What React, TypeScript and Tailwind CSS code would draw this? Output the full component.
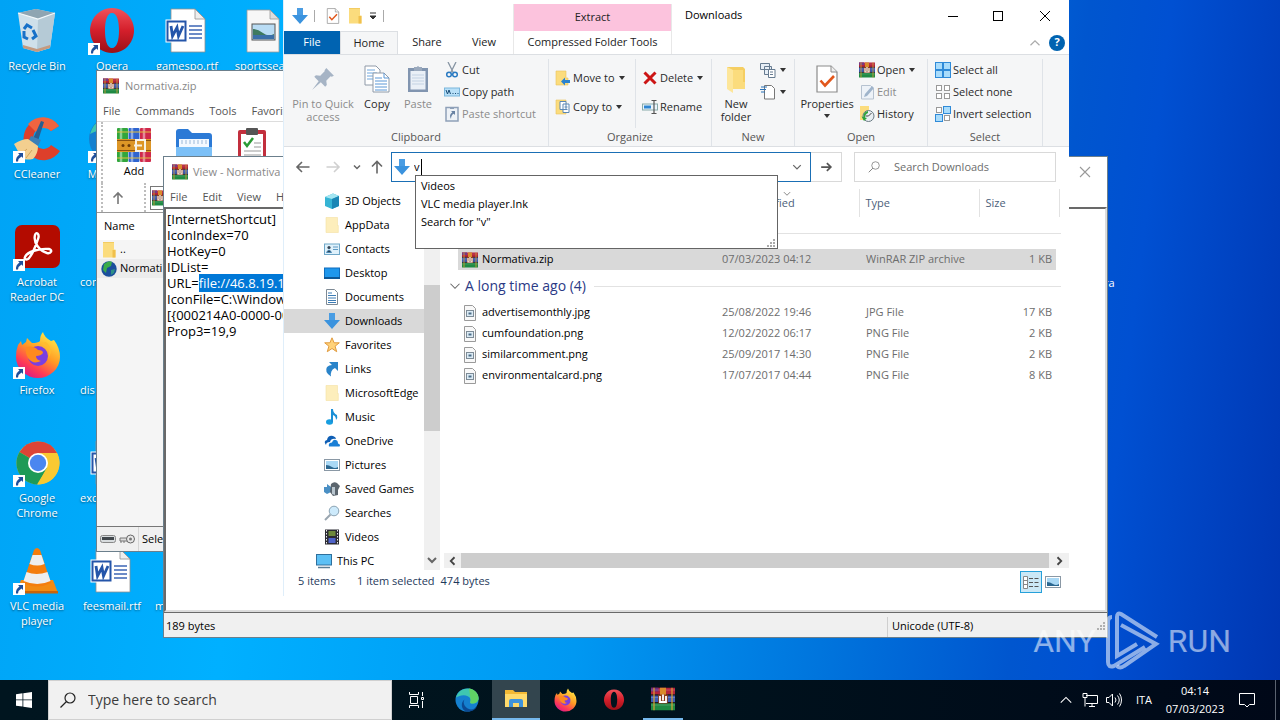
import type { ReactNode } from 'react'
import clsx from 'clsx'

type IconProps = { className?: string }

function ArrowDown({ className = 'size-4' }: IconProps) {
  return (
    <svg viewBox="0 0 16 16" className={className}>
      <path d="M5 0h6v7h5l-8 9-8-9h5z" fill="#3b93de" />
      <path d="M5 0h6v7H5z" fill="#4a9de3" />
    </svg>
  )
}

function Winrar({ className = 'size-4' }: IconProps) {
  return (
    <svg viewBox="0 0 16 16" className={className}>
      <rect y="0.5" width="16" height="5" fill="#b3243c" />
      <rect y="5.5" width="16" height="5" fill="#3a5bb5" />
      <rect y="10.5" width="16" height="5" fill="#1f8a43" />
      <rect y="0.5" width="5" height="2.5" fill="#6c2c7b" />
      <path d="M0 2h16M0 7h16M0 12h16" stroke="#fff" strokeOpacity=".2" strokeWidth=".7" />
      <path d="M0 5.3h16M0 10.4h16" stroke="#251a20" strokeWidth=".8" />
      <path d="M2 .5v15M14 .5v15" stroke="#d9a233" strokeWidth=".8" />
      <rect x="6" y="0.5" width="4" height="10" fill="#d98a2b" />
      <rect x="4.8" y="5" width="6.4" height="6" fill="#8c3f1c" />
      <path d="M6 6v4h4V6M8 5v4" stroke="#fff" strokeWidth="1.2" fill="none" />
    </svg>
  )
}

function WinrarBooks({ className = 'size-9' }: IconProps) {
  return (
    <svg viewBox="0 0 34 36" className={className}>
      <rect x="0" y="1" width="11" height="34" rx="1" fill="#31a63c" />
      <rect x="11.500" y="1" width="11" height="34" rx="1" fill="#2e64cf" />
      <rect x="23" y="1" width="11" height="34" rx="1" fill="#d0284a" />
      <path d="M4 1v34M15 1v34M27 1v34" stroke="#fff" strokeOpacity=".45" strokeWidth="2.500" />
      <path d="M0 5h34M0 31h34" stroke="#e0c040" strokeWidth="1" />
      <rect y="12" width="34" height="13" fill="#dd9626" />
      <path d="M0 13.500h34M0 23.500h34" stroke="#8a5312" strokeWidth="1" />
      <rect x="19" y="13" width="9" height="11" fill="none" stroke="#f7f2e4" strokeWidth="2" />
      <path d="M17 18.500h8" stroke="#f7f2e4" strokeWidth="2" />
      <circle cx="6" cy="18.500" r="1.500" fill="#6d3b08" />
      <circle cx="12" cy="18.500" r="1.500" fill="#6d3b08" />
    </svg>
  )
}

function Folder({ className = 'size-4' }: IconProps) {
  return (
    <svg viewBox="0 0 16 16" className={className}>
      <path d="M2 .5h11v7h1.500v8H2z" fill="#fbdc7d" />
      <path d="M11.500 8h3v7.500h-3z" fill="#f0c04c" />
      <path d="M2 .5h11" stroke="#f3cc62" />
    </svg>
  )
}

function BigFolder() {
  return (
    <svg viewBox="0 0 20 28" className="h-7 w-5">
      <path d="M1 2h16l2 2v13h-2v7H1z" fill="#f5ce62" />
      <path d="M1 2l6 3v23l-6-4z" fill="#fde69a" />
      <path d="M7 5h10v12h2v7H7z" fill="#fbdc7d" />
    </svg>
  )
}

function PaleFolder() {
  return (
    <svg viewBox="0 0 16 16" className="size-4">
      <path d="M2 .5h11.500v8h.8v7H2z" fill="#fdeebc" stroke="#f3e0a2" strokeWidth=".6" />
    </svg>
  )
}

function CheckDoc({ className = 'size-4' }: IconProps) {
  return (
    <svg viewBox="0 0 22 28" className={className}>
      <path d="M1 1h14l6 6v20H1z" fill="#fff" stroke="#8b8b8b" strokeWidth="1.200" />
      <path d="M15 1v6h6" fill="#eee" stroke="#8b8b8b" />
      <path d="M4.500 15.500l4.500 5L18 11" fill="none" stroke="#e2571c" strokeWidth="2.600" />
    </svg>
  )
}

function WordFile() {
  return (
    <svg viewBox="0 0 48 48" className="size-12">
      <path d="M8 2h24l10 10v33H8z" fill="#fff" stroke="#8f8f8f" strokeWidth=".8" />
      <path d="M32 2v10h10z" fill="#eee" stroke="#8f8f8f" strokeWidth=".8" />
      <path d="M26 19h13M26 23h13M26 27h13M26 31h13" stroke="#3d66b5" strokeWidth="1.300" />
      <rect x="3" y="13" width="21" height="22" fill="#2455a9" stroke="#fff" />
      <rect x="5.500" y="15.500" width="16" height="17" fill="#fff" />
      <path d="M8 19l1.500 10L14 20.500 15.500 29 20 19" fill="none" stroke="#2455a9" strokeWidth="2.800" />
    </svg>
  )
}

function ImageFile({ className = 'size-12' }: IconProps) {
  return (
    <svg viewBox="0 0 48 48" className={className}>
      <path d="M9 3h23l9 9v33H9z" fill="#f7f7f7" stroke="#9a9a9a" strokeWidth=".8" />
      <path d="M32 3v9h9z" fill="#ddd" stroke="#9a9a9a" strokeWidth=".8" />
      <rect x="14" y="17" width="23" height="16" fill="#b9dcf4" stroke="#555" />
      <path d="M15 22q5 0 10 4t11 1v5H15z" fill="#3e7a5f" />
      <path d="M15 28h21v4H15z" fill="#3a6fa8" />
    </svg>
  )
}

function RecycleBin() {
  return (
    <svg viewBox="0 0 48 48" className="size-12">
      <path d="M5 6l18-4 19 4-5 35-13 4-14-4z" fill="#cfe0ea" />
      <path d="M5 6l18-4 19 4-17 6z" fill="#8fa5b2" />
      <path d="M25 12L42 6l-5 35-13 4z" fill="#b5cad6" />
      <path d="M10 38l14 4 13-4v3l-13 4-14-4z" fill="#c39a80" />
      <path d="M5 6l20 6 17-6" fill="none" stroke="#f3f8fb" strokeWidth="1.200" />
      <path d="M11 22l3-4 5 3M20 23l3 6-4 3M15 32l-4-2v-6" fill="none" stroke="#1771c8" strokeWidth="3" />
    </svg>
  )
}

function Opera({ className = 'size-12' }: IconProps) {
  return (
    <svg viewBox="0 0 48 48" className={className}>
      <defs>
        <linearGradient id="opera" x1="0" y1="0" x2="0" y2="1">
          <stop offset="0" stopColor="#f0525b" />
          <stop offset="0.500" stopColor="#d41f2b" />
          <stop offset="1" stopColor="#9a1017" />
        </linearGradient>
      </defs>
      <path
        d="M24 1a22 22.500 0 1 0 .1 0zM24 6c5 0 7 8 7 17.500S29 41 24 41s-7-8-7-17.500S19 6 24 6z"
        fill="url(#opera)"
        fillRule="evenodd"
      />
    </svg>
  )
}

function CCleaner() {
  return (
    <svg viewBox="0 0 48 48" className="size-12">
      <path d="M46 11A20 21 0 1 0 47 36l-9-6a10 11 0 1 1 0-14z" fill="#dd3f2b" />
      <path d="M46 11A20 21 0 0 0 15 9l8 8a10 10 0 0 1 15-1z" fill="#ef6440" />
      <path d="M28 6l3 1-6 19-5-2z" fill="#285f91" />
      <path d="M18 21l10 4-3 6-10-4z" fill="#3b80b8" />
      <path d="M1 29q8-5 14-5l10 7q0 8-5 13-10 2-19-3l5-3z" fill="#f3cf8f" />
      <path d="M6 41l8-7M13 43l6-8" stroke="#d3a45c" />
    </svg>
  )
}

function Acrobat() {
  return (
    <svg viewBox="0 0 48 48" className="size-12">
      <rect x="2" y="2" width="45" height="43" rx="7" fill="#b30b00" />
      <path
        d="M12 34c2-5 14-9 24-8 4 1 2 5-2 4-7-2-14-10-12-18 1-4 5-1 3 4-2 7-7 18-10 20-2 1-4 0-3-2z"
        fill="none"
        stroke="#fff"
        strokeWidth="2.400"
      />
    </svg>
  )
}

function Firefox({ className = 'size-12' }: IconProps) {
  return (
    <svg viewBox="0 0 48 48" className={className}>
      <defs>
        <linearGradient id="fox" x1="0.800" y1="0" x2="0.200" y2="1">
          <stop offset="0" stopColor="#fff04a" />
          <stop offset="0.450" stopColor="#ff9a24" />
          <stop offset="0.750" stopColor="#ff3b55" />
          <stop offset="1" stopColor="#d4148f" />
        </linearGradient>
      </defs>
      <path
        d="M5 14l3-4 1 4 4-3 1-4 5 5q6 0 8-2 0-6 3-9 1 5 8 9l3-1q6 8 6 17a22 21 0 1 1-44 0q0-7 2-12z"
        fill="url(#fox)"
      />
      <circle cx="25" cy="25" r="10" fill="#7a3fe0" />
      <path d="M13 16q8-2 12 3 5 0 5 3-2 3-7 3 0 4 5 5-8 4-13-3-3-5-2-11z" fill="#ff8a1f" />
      <path d="M20 13q12-4 16 6 1 6-2 10 8-10-1-18z" fill="#ffbd2e" />
    </svg>
  )
}

function Chrome() {
  return (
    <svg viewBox="0 0 48 48" className="size-12">
      <circle cx="25" cy="24" r="21.500" fill="#f9c932" />
      <path d="M25 24L6.500 13A21.500 21.500 0 0 1 44 14z" fill="#dc4437" />
      <path d="M25 24L6.500 13A21.500 21.500 0 0 0 24 45.500L34 29z" fill="#1e9a57" />
      <path d="M25 14h19a21.500 21.500 0 0 1-19 31.500l9-17z" fill="#f9c932" />
      <circle cx="25" cy="24" r="10" fill="#fff" />
      <circle cx="25" cy="24" r="8.200" fill="#4a86f0" />
    </svg>
  )
}

function Vlc() {
  return (
    <svg viewBox="0 0 48 48" className="size-12">
      <path d="M8 33h32l5 13H3z" fill="#f28a12" />
      <path d="M3 44h42v2.500H3z" fill="#c9640a" />
      <path d="M21 3q3-4 6 0l11 33q-14 7-28 0z" fill="#f47d0d" />
      <path d="M19.500 8h9l3 9q-7 3-15 0z" fill="#eee" />
      <path d="M13.500 25q10 4 21 0l3 9q-13 6-27 0z" fill="#eee" />
    </svg>
  )
}

function Edge({ className = 'size-12' }: IconProps) {
  return (
    <svg viewBox="0 0 48 48" className={className}>
      <circle cx="24" cy="24" r="23" fill="#1580cf" />
      <path d="M2 19C6 5 18 0 28 1c14 2 20 13 19 21-1 7-8 10-14 9-5-1-1-4-2-9-3-8-15-9-22-6-3 1-5 2-7 3z" fill="#3fc6b0" />
      <path d="M28 1c14 2 20 13 19 21-1 7-8 10-14 9-5-1-1-4-2-9z" fill="#5fd365" />
      <path d="M19 23c-5 7 2 19 13 20 5 0 9-3 12-6-5 9-14 11-22 10-10-4-11-18-3-24z" fill="#0b4a94" />
    </svg>
  )
}

function ShortcutBadge() {
  return (
    <svg viewBox="0 0 12 12" className="absolute bottom-0 left-0 size-3">
      <rect width="12" height="12" fill="#fff" />
      <path d="M5 2h5v5L8.500 5.500Q5.500 7 5 10.500H3Q2.500 6 6.500 3.500z" fill="#1f4f9b" />
    </svg>
  )
}

type Shortcut = { label?: string; icon?: ReactNode; link?: boolean; cut?: boolean }

// column by column, six rows each
const shortcuts: Shortcut[] = [
  { label: 'Recycle Bin', icon: <RecycleBin /> },
  { label: 'CCleaner', icon: <CCleaner />, link: true },
  { label: 'Acrobat Reader DC', icon: <Acrobat />, link: true },
  { label: 'Firefox', icon: <Firefox />, link: true },
  { label: 'Google Chrome', icon: <Chrome />, link: true },
  { label: 'VLC media player', icon: <Vlc />, link: true },
  { label: 'Opera', icon: <Opera />, link: true },
  { label: 'Microsoft', icon: <Edge />, link: true },
  { label: 'con', cut: true },
  { label: 'dis', cut: true },
  { label: 'exc', icon: <WordFile />, cut: true },
  { label: 'feesmail.rtf', icon: <WordFile /> },
  { label: 'gamespo.rtf', icon: <WordFile /> },
  {},
  {},
  {},
  {},
  { label: 'ma', cut: true },
  { label: 'sportssear', icon: <ImageFile /> },
]

function Desktop() {
  return (
    <div className="grid w-max auto-cols-[75px] grid-flow-col grid-rows-[repeat(6,108px)] text-white">
      {shortcuts.map((s, i) => (
        <div key={i} className="flex w-[74px] flex-col items-center pt-[7px]">
          <div className="relative size-12">
            {s.icon}
            {s.link && <ShortcutBadge />}
          </div>
          <span
            className={clsx(
              'mt-[3px] w-full px-[5px] leading-[15px] [text-shadow:0_1px_2px_#00000080]',
              s.cut ? 'text-left' : 'text-center',
            )}
          >
            {s.label}
          </span>
        </div>
      ))}
    </div>
  )
}

function Menu({ items }: { items: string[] }) {
  return (
    <div className="flex h-5 items-center gap-[15px] px-[6px] text-[#555]">
      {items.map((item) => (
        <button key={item} className="whitespace-nowrap">
          {item}
        </button>
      ))}
    </div>
  )
}

function Grip() {
  return <span className="h-full border-l-2 border-dotted border-[#bdbdbd]" />
}

function ArchiveWindow() {
  return (
    <section className="absolute top-[70px] left-24 flex h-[482px] w-3/5 flex-col border border-[#6b7f8c] bg-white">
      <header className="flex h-[30px] items-center gap-[6px] px-[6px] text-[#888]">
        <Winrar />
        Normativa.zip
      </header>
      <Menu items={['File', 'Commands', 'Tools', 'Favorites']} />
      <div className="flex h-[62px] items-start border-t border-[#ddd] pl-1">
        <Grip />
        <button className="flex w-[62px] flex-col items-center pt-[5px] text-black">
          <WinrarBooks />
          <span className="leading-4">Add</span>
        </button>
        <button aria-label="Extract To" className="flex w-[58px] justify-center pt-[6px]">
          <svg viewBox="0 0 38 38" className="size-[38px]">
            <path d="M1 4q0-3 3-3h9l4 4h17q3 0 3 3v28H1z" fill="#2c7ad6" />
            <path d="M4 11h30v25H4z" fill="#f4f9ff" />
            <path d="M7 12v4M11 12v4M15 12v4M19 12v4M23 12v4M27 12v4M31 12v4" stroke="#9db9d8" />
            <path d="M1 19h36v17H1z" fill="#7cc0f7" />
          </svg>
        </button>
        <button aria-label="Test" className="flex w-[58px] justify-center pt-[6px]">
          <svg viewBox="0 0 30 38" className="h-[38px] w-[30px]">
            <rect x="1" y="2" width="28" height="36" rx="2" fill="#c22f3d" />
            <rect x="4" y="6" width="22" height="30" fill="#fff" />
            <rect x="9" y="0" width="12" height="7" rx="1" fill="#555" />
            <path d="M7 14l3 4 6-8" stroke="#2a9a35" strokeWidth="2.500" fill="none" />
            <path d="M17 15h7M17 19h7M7 23h17M7 27h17" stroke="#999" />
          </svg>
        </button>
      </div>
      <div className="flex h-[30px] items-center border-b border-[#999] pl-1">
        <Grip />
        <button aria-label="Up" className="mr-[18px] ml-[7px]">
          <svg viewBox="0 0 16 16" className="size-4">
            <path d="M8 14V3M3.500 7.500L8 3l4.500 4.500" fill="none" stroke="#777" strokeWidth="1.600" />
          </svg>
        </button>
        <Grip />
        <div className="ml-1 flex h-6 flex-1 items-center border border-[#777] pl-px">
          <Winrar />
        </div>
      </div>
      <div className="flex-1 bg-[#f5f5f5] text-black">
        <div className="flex h-[27px] items-center bg-white pl-[7px]">Name</div>
        <div className="flex h-[19px] items-center gap-[3px] pl-1">
          <Folder className="size-4" />
          ..
        </div>
        <div className="flex h-[19px] items-center gap-[3px] bg-[#ececec] pl-1">
          <svg viewBox="0 0 16 16" className="size-4">
            <circle cx="8" cy="8" r="7.700" fill="#1b4f9c" />
            <path d="M3 3q5-4 8-2l-1 4-4 2-1 5-3-3z" fill="#3bab4a" />
            <path d="M10 9l4-1-1 4-3 2z" fill="#2d8f86" />
          </svg>
          Normati
        </div>
      </div>
      <footer className="flex h-[25px] items-center gap-[3px] border-t border-[#777] bg-[#f0f0f0] pl-[3px] text-black">
        <svg viewBox="0 0 16 8" className="h-2 w-4">
          <rect x=".5" y=".5" width="15" height="7" rx="2" fill="#d8dcde" stroke="#888" />
          <rect x="2" y="2" width="12" height="3" fill="#41474c" />
        </svg>
        <svg viewBox="0 0 16 12" className="h-3 w-4">
          <path d="M1 5h8v3H1zM2 8v2M5 8v2" stroke="#777" fill="#ddd" />
          <circle cx="11.500" cy="6" r="4" fill="#e8e8e8" stroke="#666" />
          <circle cx="11.500" cy="6" r="1.500" fill="#777" />
        </svg>
        <span className="h-full border-l border-[#d5d5d5]" />
        <span>Sele</span>
      </footer>
    </section>
  )
}

const lines = ['[InternetShortcut]', 'IconIndex=70', 'HotKey=0', 'IDList=']

function ViewerWindow() {
  return (
    <section className="absolute top-[156px] right-[172px] left-[163px] flex h-[482px] flex-col border border-[#6b7f8c] bg-white">
      <header className="flex h-[30px] items-center gap-[5px] px-2 text-[#888]">
        <Winrar />
        <span className="flex-1">View - Normativa</span>
        <button aria-label="Close" className="mr-2">
          <svg viewBox="0 0 12 12" className="size-3">
            <path d="M1 1l10 10M11 1L1 11" stroke="#999" strokeWidth="1.100" />
          </svg>
        </button>
      </header>
      <Menu items={['File', 'Edit', 'View', 'Help']} />
      <pre className="flex-1 border-2 border-[#696969] border-r-[#dcdcdc] border-b-[#dcdcdc] pt-[2px] pl-px font-['Open_Sans',sans-serif] text-[13px] leading-4 text-black">
        {lines.map((line) => (
          <div key={line}>{line}</div>
        ))}
        <div>
          URL=<span className="bg-[#0078d7] text-white">file://46.8.19.1</span>
        </div>
        <div>{'IconFile=C:\\Windows'}</div>
        <div>{'[{000214A0-0000-00'}</div>
        <div>Prop3=19,9</div>
      </pre>
      <footer className="flex h-[25px] items-center border-t border-[#696969] bg-[#f0f0f0] pt-[3px] text-black">
        <span className="flex-1 pl-[2px]">189 bytes</span>
        <span className="flex h-5 w-[220px] items-center justify-between border-l border-[#cfcfcf] pl-1">
          Unicode (UTF-8)
          <svg viewBox="0 0 12 12" className="size-3">
            <path d="M8 2h2M5 5h2M8 5h2M2 8h2M5 8h2M8 8h2" stroke="#b0b0b0" strokeWidth="2" />
          </svg>
        </span>
      </footer>
    </section>
  )
}

function Caret() {
  return (
    <svg viewBox="0 0 6 4" className="h-1 w-1.5 shrink-0">
      <path d="M0 0h6L3 4z" fill="#333" />
    </svg>
  )
}

type SmallButtonProps = { icon: ReactNode; label: string; muted?: boolean; caret?: boolean }

function SmallButton({ icon, label, muted, caret }: SmallButtonProps) {
  return (
    <button
      className={clsx(
        'flex h-[22px] items-center gap-[2px] whitespace-nowrap',
        muted ? 'text-[#8b8b8b]' : 'text-[#2a2a2a]',
      )}
    >
      {icon}
      {label}
      {caret && (
        <span className="pl-[2px]">
          <Caret />
        </span>
      )}
    </button>
  )
}

type BigButtonProps = { icon: ReactNode; label: string; muted?: boolean; className: string; caret?: boolean }

function BigButton({ icon, label, muted, className, caret }: BigButtonProps) {
  return (
    <button
      className={clsx(
        'flex flex-col items-center pt-[6px] leading-[13px]',
        muted ? 'text-[#8b8b8b]' : 'text-[#2a2a2a]',
        className,
      )}
    >
      <span className="mb-1 flex h-7 items-center">{icon}</span>
      {label}
      {caret && (
        <span className="mt-1">
          <Caret />
        </span>
      )}
    </button>
  )
}

function Group({ name, className, children }: { name: string; className: string; children: ReactNode }) {
  return (
    <div className={clsx('flex shrink-0 flex-col border-r border-[#dfe3e8] text-[#555]', className)}>
      <div className="flex flex-1">{children}</div>
      <div className="h-[18px] text-center leading-[18px]">{name}</div>
    </div>
  )
}

function SelectIcon({ fills }: { fills: boolean[] }) {
  return (
    <svg viewBox="0 0 16 16" className="size-4">
      {fills.map((on, i) => (
        <rect
          key={i}
          x={(i % 2) * 8 + (on ? 0.5 : 1.5)}
          y={Math.floor(i / 2) * 8 + (on ? 0.5 : 1.5)}
          width={on ? 7 : 5}
          height={on ? 7 : 5}
          fill={on ? '#a9dcfb' : '#fff'}
          stroke={on ? '#2f8ad8' : '#999'}
        />
      ))}
    </svg>
  )
}

function Ribbon() {
  return (
    <div className="flex h-[93px] shrink-0 border-y border-[#dcdfe3] bg-[#f5f6f7] pt-1">
      <Group name="Clipboard" className="w-[265px]">
        <BigButton
          label="Pin to Quick access"
          muted
          className="w-[78px]"
          icon={
            <svg viewBox="0 0 22 22" className="size-6">
              <path d="M14 1l7 7-2 1-1-.5-4 4 .5 4-1.500 1.500-4-4L1 21l6-8-4-4 1.500-1.500 4 .5 4-4L12.500 3z" fill="#a6b4c5" />
            </svg>
          }
        />
        <BigButton
          label="Copy"
          className="w-[30px]"
          icon={
            <svg viewBox="0 0 26 28" className="h-7 w-[26px]">
              <path d="M1 1h11l4 4v15H1z" fill="#fff" stroke="#8f9aa8" />
              <path d="M3 5h8M3 8h10M3 11h6M3 14h6" stroke="#6ea6dd" />
              <path d="M9 8h11l5 5v14H9z" fill="#fff" stroke="#8f9aa8" />
              <path d="M20 8v5h5M11 13h7M11 16h12M11 19h12M11 22h12M11 25h12" stroke="#5b97d6" fill="none" />
            </svg>
          }
        />
        <BigButton
          label="Paste"
          muted
          className="w-[52px]"
          icon={
            <svg viewBox="0 0 22 28" className="h-7 w-[22px]">
              <rect x="1" y="3" width="20" height="24" fill="#8195b0" />
              <rect x="3.500" y="6" width="15" height="18.500" fill="#eaf0f7" />
              <path d="M7 2h3q1-2 2 0h3v4H7z" fill="#9aa9bd" />
              <path d="M5 10h12M5 13h12M5 16h12M5 19h12" stroke="#c3d2e3" />
            </svg>
          }
        />
        <div className="flex flex-col">
          <SmallButton
            label="Cut"
            icon={
              <svg viewBox="0 0 16 16" className="size-4">
                <path d="M4 0l5.500 11M12 0L6.500 11" stroke="#8694a3" strokeWidth="1.300" />
                <circle cx="5" cy="12.500" r="2.300" fill="none" stroke="#2a7ac2" strokeWidth="1.500" />
                <circle cx="11" cy="12.500" r="2.300" fill="none" stroke="#2a7ac2" strokeWidth="1.500" />
              </svg>
            }
          />
          <SmallButton
            label="Copy path"
            icon={
              <svg viewBox="0 0 16 16" className="size-4">
                <rect x=".5" y="4" width="15" height="8" fill="#b8e0f8" stroke="#7ab6dc" />
                <path d="M2 6l1.500 4L5 6l1.500 4M8.500 9.500h1M11 9.500h1M13.500 9.500h1" stroke="#174a75" fill="none" />
              </svg>
            }
          />
          <SmallButton
            label="Paste shortcut"
            muted
            icon={
              <svg viewBox="0 0 16 16" className="size-4">
                <rect x="2" y="1.500" width="12" height="13.500" fill="#eef2f7" stroke="#8ea0b8" strokeWidth="1.500" />
                <path d="M6 1h4v2H6z" fill="#8ea0b8" />
                <path d="M7 5h4v4L9.700 7.700Q7 9 7 13 4.500 9 8.300 6.300z" fill="#6882a3" />
              </svg>
            }
          />
        </div>
      </Group>
      <Group name="Organize" className="w-[163px]">
        <div className="flex w-[86px] flex-col gap-[7px] pt-2 pl-[6px]">
          <SmallButton
            label="Move to"
            caret
            icon={
              <svg viewBox="0 0 16 16" className="size-4">
                <path d="M1 1h10v7h2v7H1z" fill="#fbdc7d" stroke="#e9c25a" strokeWidth=".6" />
                <path d="M6 11.500l4-4V10h5v3h-5v2.500z" fill="#2a82cf" />
              </svg>
            }
          />
          <SmallButton
            label="Copy to"
            caret
            icon={
              <svg viewBox="0 0 16 16" className="size-4">
                <path d="M1 1h10v14H1z" fill="#fbdc7d" stroke="#e9c25a" strokeWidth=".6" />
                <path d="M5 2.500h6v8H5zM8 5h6v8.500H8z" fill="#fff" stroke="#5c88b5" />
                <path d="M9.500 8h3M9.500 10.500h3" stroke="#5c88b5" />
              </svg>
            }
          />
        </div>
        <div className="flex flex-col gap-[7px] border-l border-[#dfe3e8] pt-2 pl-[6px]">
          <SmallButton
            label="Delete"
            caret
            icon={
              <svg viewBox="0 0 16 16" className="size-4">
                <path d="M2.500 2.500l11 11M13.500 2.500l-11 11" stroke="#cc1515" strokeWidth="3" />
              </svg>
            }
          />
          <SmallButton
            label="Rename"
            icon={
              <svg viewBox="0 0 16 16" className="size-4">
                <rect x=".5" y="5" width="15" height="6" fill="#e9f4fc" stroke="#8aa" />
                <rect x="2" y="6.500" width="7" height="3" fill="#2f86d2" />
                <path d="M9.500 1.500h5M9.500 14.500h5M12 2v12" stroke="#555" strokeWidth="1.200" />
              </svg>
            }
          />
        </div>
      </Group>
      <Group name="New" className="w-[83px]">
        <BigButton label="New folder" className="w-12" icon={<BigFolder />} />
        <div className="flex flex-col">
          <SmallButton
            label=""
            caret
            icon={
              <svg viewBox="0 0 16 16" className="size-4">
                <path d="M.5 1.500h9v6h-9zM4.500 4.500h7v8h-7z" fill="#e6eef6" stroke="#667b90" />
                <path d="M8.500 7.500h6.500v8H8.500zM10 10h3M10 12.500h3" fill="#fff" stroke="#667b90" />
              </svg>
            }
          />
          <SmallButton
            label=""
            caret
            icon={
              <svg viewBox="0 0 16 16" className="size-4">
                <path d="M4.500 1.500h7l3 3v10.500h-10z" fill="#fff" stroke="#777" />
                <path d="M1 3h6M0 5.500h6M1 8h4" stroke="#2a72b8" strokeWidth="1.200" />
              </svg>
            }
          />
        </div>
      </Group>
      <Group name="Open" className="w-[133px]">
        <BigButton label="Properties" className="w-16" icon={<CheckDoc className="h-7 w-[22px]" />} caret />
        <div className="flex flex-col">
          <SmallButton label="Open" caret icon={<Winrar />} />
          <SmallButton
            label="Edit"
            muted
            icon={
              <svg viewBox="0 0 16 16" className="size-4">
                <path d="M2.500 1.500h9l3 3v10.500h-12z" fill="#edf2f8" stroke="#b6c2d0" />
                <path d="M5 13l1-3 7-8 2 2-7 8z" fill="#9fb4cb" />
              </svg>
            }
          />
          <SmallButton
            label="History"
            icon={
              <svg viewBox="0 0 16 16" className="size-4">
                <path d="M1 0h9v14H1z" fill="#fbdc7d" />
                <circle cx="9.500" cy="10" r="5.500" fill="#e8eef2" stroke="#6a7a83" />
                <path d="M9.500 10l3-3M9.500 10h-3" stroke="#444" />
                <path d="M9 5Q4 6 4.500 11l-2-.5L5 15l3-3-2-.5Q6 8 9 7z" fill="#2fa33c" />
              </svg>
            }
          />
        </div>
      </Group>
      <Group name="Select" className="w-[115px]">
        <div className="flex flex-col pl-[7px]">
          <SmallButton label="Select all" icon={<SelectIcon fills={[true, true, true, true]} />} />
          <SmallButton label="Select none" icon={<SelectIcon fills={[false, false, false, false]} />} />
          <SmallButton label="Invert selection" icon={<SelectIcon fills={[false, true, true, false]} />} />
        </div>
      </Group>
    </div>
  )
}

function Glyph({ d, className = 'size-4', stroke = '#666', width = 1.6 }: { d: string; className?: string; stroke?: string; width?: number }) {
  return (
    <svg viewBox="0 0 16 16" className={className}>
      <path d={d} fill="none" stroke={stroke} strokeWidth={width} />
    </svg>
  )
}

function Picture() {
  return (
    <svg viewBox="0 0 16 16" className="size-4">
      <rect x=".5" y="2.500" width="15" height="11" fill="#fff" stroke="#8a98a5" />
      <rect x="2" y="4" width="12" height="8" fill="#a9d8f5" />
      <path d="M2 8q3 0 6 2t6 0v2H2z" fill="#2b6790" />
    </svg>
  )
}

const places: { name: string; icon: ReactNode }[] = [
  {
    name: '3D Objects',
    icon: (
      <svg viewBox="0 0 16 16" className="size-4">
        <path d="M1 4l8-3.500L15 3v10l-7 3-7-3z" fill="#35b4d4" />
        <path d="M1 4l8-3.500L15 3 8 6z" fill="#a4e6f2" />
        <path d="M8 6l7-3v10l-7 3z" fill="#1a86b5" />
      </svg>
    ),
  },
  { name: 'AppData', icon: <PaleFolder /> },
  {
    name: 'Contacts',
    icon: (
      <svg viewBox="0 0 16 16" className="size-4">
        <rect x=".5" y="3" width="15" height="10.500" fill="#dff1fb" stroke="#6fa7c8" />
        <circle cx="5" cy="6.500" r="1.600" fill="#345" />
        <path d="M2.500 11.500q2.500-5 5 0zM9 6h5M9 8.500h5" fill="#345" stroke="#3c84b5" strokeWidth=".8" />
      </svg>
    ),
  },
  {
    name: 'Desktop',
    icon: (
      <svg viewBox="0 0 16 16" className="size-4">
        <rect y="2.500" width="16" height="11.500" fill="#0f6dbd" />
        <path d="M1 3.500h14v9H1z" fill="#1f97ec" />
        <path d="M0 12h16v2H0z" fill="#0d5796" />
      </svg>
    ),
  },
  {
    name: 'Documents',
    icon: (
      <svg viewBox="0 0 16 16" className="size-4">
        <path d="M2.500.5h8l3 3v12h-11z" fill="#fff" stroke="#7e8a95" />
        <path d="M4 4h4M4 6.500h8M4 9h8M4 11.500h8M4 13.500h8" stroke="#3d7cb5" />
      </svg>
    ),
  },
  { name: 'Downloads', icon: <ArrowDown /> },
  {
    name: 'Favorites',
    icon: (
      <svg viewBox="0 0 16 16" className="size-4">
        <path d="M8 .8l2.100 5h5.200l-4.200 3.400 1.600 5.500L8 11.500l-4.700 3.200 1.600-5.500L.7 5.800h5.200z" fill="#ffd27a" stroke="#e09a3e" />
      </svg>
    ),
  },
  {
    name: 'Links',
    icon: (
      <svg viewBox="0 0 16 16" className="size-4">
        <path d="M5 1h9v9l-3-3Q6 9 7 15.500 0 11 3 6q2-2 5-2z" fill="#2983c9" />
      </svg>
    ),
  },
  { name: 'MicrosoftEdge', icon: <PaleFolder /> },
  {
    name: 'Music',
    icon: (
      <svg viewBox="0 0 16 16" className="size-4">
        <ellipse cx="5.500" cy="13" rx="3.500" ry="2.800" fill="#179ee0" />
        <path d="M7 0h2q0 4 4 6 1 3-1 5 0-4-3-5v7H7z" fill="#1b8fd6" />
      </svg>
    ),
  },
  {
    name: 'OneDrive',
    icon: (
      <svg viewBox="0 0 16 16" className="size-4">
        <path d="M2 12Q-1 8 3 7q1-5 6-4 3 1 3 3-5-1-6 3-4 0-4 3z" fill="#0f5fb5" />
        <path d="M5 13.500q-1-4 3-4 1-4 5-2 1 1 1 3 3 1 1.500 3z" fill="#1a7fd6" />
      </svg>
    ),
  },
  { name: 'Pictures', icon: <Picture /> },
  {
    name: 'Saved Games',
    icon: (
      <svg viewBox="0 0 16 16" className="size-4">
        <path d="M0 6h3V3l4 3v5l-4 2-3-2z" fill="#4a8fc4" />
        <path d="M7 3q3-3 6-1l3 3-2 4v5l-5 1-3-4z" fill="#5b656e" />
        <path d="M8 6h3v8l-3-1z" fill="#b9c6cf" />
      </svg>
    ),
  },
  {
    name: 'Searches',
    icon: (
      <svg viewBox="0 0 16 16" className="size-4">
        <path d="M6.500 9.500L1 15" stroke="#9aa6b0" strokeWidth="2" />
        <circle cx="10" cy="6" r="4.800" fill="#cdeafb" stroke="#8ba3b3" />
      </svg>
    ),
  },
  {
    name: 'Videos',
    icon: (
      <svg viewBox="0 0 16 16" className="size-4">
        <rect x="1" y=".5" width="14" height="15" fill="#2c2c34" />
        <path d="M2.500 1v14M13.500 1v14" stroke="#eee" strokeDasharray="1.500 1.500" />
        <path d="M4.500 2h7v5h-7z" fill="#6f8a3b" />
        <path d="M4.500 9h7v5h-7z" fill="#4f63c8" />
      </svg>
    ),
  },
]

function Sidebar() {
  return (
    <div className="flex w-[156px] shrink-0 justify-between">
      <nav className="flex-1 overflow-hidden text-black">
        {places.map((place) => (
          <a
            key={place.name}
            href="#"
            className={clsx(
              'flex h-6 items-center gap-[5px] pl-10 whitespace-nowrap',
              place.name === 'Downloads' && 'bg-[#d9d9d9]',
            )}
          >
            {place.icon}
            {place.name}
          </a>
        ))}
        <a href="#" className="flex h-6 items-center gap-[5px] pl-8">
          <svg viewBox="0 0 16 16" className="size-4">
            <rect x=".5" y="1.500" width="15" height="10.500" fill="#5cc0f5" stroke="#2f6f9c" />
            <path d="M2 14.500h12" stroke="#5a7d95" strokeWidth="1.500" />
          </svg>
          This PC
        </a>
      </nav>
      <div className="flex w-4 flex-col items-center bg-[#f0f0f0]">
        <div className="mt-24 h-[146px] w-4 bg-[#cdcdcd]" />
        <div className="flex-1" />
        <button aria-label="Scroll down" className="mb-0.5">
          <Glyph d="M4 6l4 4 4-4" width={2} />
        </button>
      </div>
    </div>
  )
}

const archiveRow = { name: 'Normativa.zip', date: '07/03/2023 04:12', type: 'WinRAR ZIP archive', size: '1 KB' }
const fileRows = [
  { name: 'advertisemonthly.jpg', date: '25/08/2022 19:46', type: 'JPG File', size: '17 KB' },
  { name: 'cumfoundation.png', date: '12/02/2022 06:17', type: 'PNG File', size: '2 KB' },
  { name: 'similarcomment.png', date: '25/09/2017 14:30', type: 'PNG File', size: '2 KB' },
  { name: 'environmentalcard.png', date: '17/07/2017 04:44', type: 'PNG File', size: '8 KB' },
]

function FileRow({ file, selected }: { file: typeof archiveRow; selected?: boolean }) {
  const cell = selected ? 'bg-[#d9d9d9]' : ''
  return (
    <tr className="h-[21px]">
      <td />
      <td className={clsx('pl-1 text-black', cell)}>
        <span className="flex items-center gap-1">
          {selected ? (
            <Winrar />
          ) : (
            <svg viewBox="0 0 16 16" className="size-4">
              <path d="M2.500.5h8l3 3v12h-11z" fill="#f8f8f8" stroke="#9a9a9a" />
              <rect x="4.500" y="5.500" width="7" height="6" fill="#dcebf5" stroke="#7d8b96" />
              <rect x="6.500" y="7.500" width="3" height="2" fill="#4a6c86" />
            </svg>
          )}
          {file.name}
        </span>
      </td>
      <td className={clsx('pl-[7px]', cell)}>{file.date}</td>
      <td className={clsx('pl-[7px]', cell)}>{file.type}</td>
      <td className={clsx('pr-1 text-right', cell)}>{file.size}</td>
      <td />
    </tr>
  )
}

function FileTable() {
  return (
    <table className="w-full table-fixed whitespace-nowrap text-[#6d6d6d]">
      <colgroup>
        <col className="w-[18px]" />
        <col />
        <col className="w-36" />
        <col className="w-[120px]" />
        <col className="w-[77px]" />
        <col className="w-[13px]" />
      </colgroup>
      <thead>
        <tr className="h-7 text-left text-[#4c607a]">
          <th />
          <th aria-label="Name" />
          <th className="relative border-r border-[#e2e2e2] pl-[7px] font-normal">
            Date modified
            <Glyph d="M3 5l5 5 5-5" className="absolute top-0 left-[67px] size-2.5" stroke="#888" />
          </th>
          <th className="border-r border-[#e2e2e2] pl-[6px] font-normal">Type</th>
          <th className="pl-[6px] font-normal">Size</th>
          <th>
            <div className="ml-[3px] h-7 border-l border-[#e2e2e2]" />
          </th>
        </tr>
      </thead>
      <tbody>
        <tr className="h-8">
          <td colSpan={6} className="pr-2">
            <div className="border-t border-[#e2e2e2]" />
          </td>
        </tr>
        <FileRow file={archiveRow} selected />
        <tr className="h-8">
          <td colSpan={6} className="pr-2">
            <div className="flex items-center text-[#2b3a86]">
              <Glyph d="M2 5l6 6 6-6" className="mr-1 ml-[9px] size-3" width={1.4} />
              <span className="mr-2 text-sm">A long time ago (4)</span>
              <span className="flex-1 border-t border-[#e2e2e2]" />
            </div>
          </td>
        </tr>
        {fileRows.map((file) => (
          <FileRow key={file.name} file={file} />
        ))}
      </tbody>
    </table>
  )
}

function AddressRow() {
  return (
    <div className="flex h-[42px] shrink-0 items-start pt-[5px] pr-[13px] pl-[11px]">
      <div className="flex h-[30px] items-center">
        <button aria-label="Back" className="w-[30px]">
          <Glyph d="M14.500 8H2M7 3L2 8l5 5" />
        </button>
        <button aria-label="Forward" className="w-[28px]">
          <Glyph d="M1.500 8H14M9 3l5 5-5 5" stroke="#d0d0d0" />
        </button>
        <button aria-label="Recent locations" className="w-[16px]">
          <Glyph d="M2 5l6 6 6-6" className="size-2" width={3} />
        </button>
        <button aria-label="Up" className="w-[22px]">
          <Glyph d="M8 14.500V2.500M3 7.500l5-5 5 5" />
        </button>
      </div>
      <div className="relative flex h-[30px] flex-1 items-center border border-[#1a6fb5] bg-white px-[2px]">
        <ArrowDown />
        <input
          aria-label="Address"
          defaultValue="v"
          className="ml-1 w-[7px] bg-transparent text-black outline-none"
        />
        <span className="h-4 w-px bg-black" />
        <button aria-label="Previous locations" className="mr-[6px] ml-auto">
          <Glyph d="M2 5l6 6 6-6" className="size-2.5" width={2} />
        </button>
        <ul className="absolute top-[22px] right-8 left-[23px] z-10 h-[74px] border border-[#646464] bg-white px-[5px] pt-px leading-[18px] text-black">
          <li>Videos</li>
          <li>VLC media player.lnk</li>
          <li>Search for "v"</li>
          <svg viewBox="0 0 8 8" className="absolute right-0.5 bottom-px size-2">
            <path d="M6 1h2M3 4h2M6 4h2M0 7h2M3 7h2M6 7h2" stroke="#aaa" strokeWidth="2" />
          </svg>
        </ul>
      </div>
      <button
        aria-label="Go to"
        className="flex h-[30px] w-[31px] items-center justify-center border border-l-0 border-[#d9d9d9]"
      >
        <Glyph d="M2.500 8h11M9 3.500L13.500 8 9 12.500" className="size-3.5" stroke="#555" width={2} />
      </button>
      <label className="ml-3 flex h-[30px] w-[202px] items-center gap-[14px] border border-[#d9d9d9] pl-[13px]">
        <svg viewBox="0 0 16 16" className="size-3.5">
          <circle cx="10" cy="6" r="5" fill="none" stroke="#777" />
          <path d="M6.500 9.500L1 15" stroke="#777" strokeWidth="1.200" />
        </svg>
        <input
          aria-label="Search"
          placeholder="Search Downloads"
          className="w-full min-w-0 outline-none placeholder:text-[#6d6d6d]"
        />
      </label>
    </div>
  )
}

function ExplorerWindow() {
  return (
    <section className="absolute top-0 left-[283px] flex h-[596px] w-[786px] flex-col border-l border-[#dfeefa] bg-white text-[#222]">
      <header className="flex h-[54px] shrink-0">
        <div className="flex w-[229px] flex-col">
          <div className="flex h-[31px] items-center gap-[6px] pl-2">
            <ArrowDown />
            <span className="mr-1 h-3 border-l border-[#aaa]" />
            <CheckDoc />
            <Folder />
            <svg viewBox="0 0 8 8" className="size-2">
              <path d="M1 1h6M1 4h6L4 7z" stroke="#333" fill="#333" />
            </svg>
            <span className="h-3 border-l border-[#aaa]" />
          </div>
          <div className="flex h-[23px]">
            <button className="w-14 bg-[#0063b1] text-white">File</button>
            <button className="w-[58px] border-x border-t border-[#dcdfe3] bg-[#f5f6f7]">Home</button>
            <button className="w-[58px]">Share</button>
            <button className="w-14">View</button>
          </div>
        </div>
        <div className="mt-1 flex w-[159px] flex-col border-x border-[#e8e8e8] text-center">
          <div className="flex h-[27px] items-center justify-center bg-[#fcc3dd]">Extract</div>
          <button className="flex-1">Compressed Folder Tools</button>
        </div>
        <div className="flex flex-1 flex-col">
          <div className="flex h-[31px] items-center pl-[13px]">
            <h1 className="flex-1 text-black">Downloads</h1>
            <button aria-label="Minimize" className="flex w-[45px] justify-center">
              <svg viewBox="0 0 10 10" className="size-2.5">
                <path d="M0 5.500h10" stroke="#000" />
              </svg>
            </button>
            <button aria-label="Maximize" className="flex w-[45px] justify-center">
              <svg viewBox="0 0 10 10" className="size-2.5">
                <rect x=".5" y=".5" width="9" height="9" fill="none" stroke="#000" />
              </svg>
            </button>
            <button aria-label="Close" className="flex w-[49px] justify-center">
              <svg viewBox="0 0 10 10" className="size-2.5">
                <path d="M0 0l10 10M10 0L0 10" stroke="#000" />
              </svg>
            </button>
          </div>
          <div className="flex h-[23px] items-center justify-end gap-2 pr-1">
            <button aria-label="Minimize the ribbon">
              <Glyph d="M2 11l6-6 6 6" className="size-3" stroke="#aaa" />
            </button>
            <button
              aria-label="Help"
              className="flex size-4 items-center justify-center rounded-full bg-[#0063b1] font-bold text-white"
            >
              ?
            </button>
          </div>
        </div>
      </header>
      <Ribbon />
      <AddressRow />
      <div className="flex min-h-0 flex-1">
        <Sidebar />
        <div className="flex min-w-0 flex-1 flex-col">
          <div className="flex-1">
            <FileTable />
          </div>
          <div className="mb-0.5 ml-1 flex h-[15px] items-center bg-[#f0f0f0]">
            <button aria-label="Scroll left" className="flex w-[17px] justify-center">
              <Glyph d="M10 3L5 8l5 5" className="size-3" stroke="#444" width={2.4} />
            </button>
            <div className="h-full flex-1 bg-[#cdcdcd]" />
            <button aria-label="Scroll right" className="flex w-5 justify-center">
              <Glyph d="M6 3l5 5-5 5" className="size-3" stroke="#444" width={2.4} />
            </button>
          </div>
        </div>
      </div>
      <footer className="mb-[3px] flex h-[23px] shrink-0 items-center pr-2 pl-[14px] text-[#1e395b]">
        <span className="w-[59px]">5 items</span>
        <span className="mr-[6px]">1 item selected</span>
        <span className="flex-1">474 bytes</span>
        <button aria-label="Details view" className="border border-[#26a0da] bg-[#cbe8f6] px-[2px] py-[2px]">
          <svg viewBox="0 0 16 16" className="size-4">
            <path d="M.5 2.500h4v12h-4zM.5 6.500h4M.5 10.500h4" fill="#fff" stroke="#888" />
            <path d="M6 4.500h4M11.500 4.500h4M6 8.500h4M11.500 8.500h4M6 12.500h4M11.500 12.500h4" stroke="#555" />
          </svg>
        </button>
        <button aria-label="Large icons view" className="ml-[3px]">
          <Picture />
        </button>
      </footer>
    </section>
  )
}

function Watermark() {
  return (
    <div className="absolute right-[49px] bottom-2 flex items-center gap-2 font-[Roboto,sans-serif] text-[32px] leading-none text-white/55">
      ANY
      <svg viewBox="0 0 56 62" className="h-[62px] w-14" fill="none" stroke="currentColor" strokeWidth="4">
        <path d="M8 7Q4 7 4 12v40q0 6 6 4l31-19" />
        <path d="M53 27L17 4q-4-2-4 3v39l20-12" />
        <path d="M17 15l35 19-32 22q-4 3-7 0" />
      </svg>
      RUN
    </div>
  )
}

function Taskbar() {
  return (
    <footer className="flex h-10 shrink-0 items-center bg-linear-to-r from-[#00151f] via-[#00131d] to-[#000818] text-white">
      <button aria-label="Start" className="flex w-12 justify-center">
        <svg viewBox="0 0 16 16" className="size-4" fill="#fff">
          <path d="M0 2.200l6.500-.9v6.200H0zM7.300 1.200L16 0v7.500H7.300zM0 8.300h6.500v6.300L0 13.700zM7.300 8.300H16V16l-8.700-1.200z" />
        </svg>
      </button>
      <label className="flex h-10 w-[344px] items-center gap-3 border border-[#d0d0d0] bg-[#f1f1f1] pl-[11px] text-[#444]">
        <svg viewBox="0 0 16 16" className="size-4">
          <circle cx="10" cy="6" r="5" fill="none" stroke="#222" strokeWidth="1.200" />
          <path d="M6.500 9.500L.5 15.500" stroke="#222" strokeWidth="1.300" />
        </svg>
        <input
          aria-label="Search Windows"
          placeholder="Type here to search"
          className="flex-1 text-sm outline-none placeholder:text-[#3c3c3c]"
        />
      </label>
      <button aria-label="Task view" className="flex w-[50px] justify-center">
        <svg viewBox="0 0 16 16" className="size-4" fill="none" stroke="#fff">
          <path d="M.5 0v2.500h9V0M.5 16v-2.500h9V16M1.500 4.500h7v7h-7zM13.500 0v4M13.500 9v7M12.500 5.500h2v2h-2z" />
        </svg>
      </button>
      <button aria-label="Edge" className="flex w-[50px] justify-center">
        <Edge className="size-6" />
      </button>
      <button
        aria-label="File Explorer"
        className="flex h-10 w-12 items-center justify-center border-b-2 border-[#76b9ed] bg-[#33454e]"
      >
        <svg viewBox="0 0 22 20" className="h-5 w-[22px]">
          <path d="M0 1h8l2 2h12v15H0z" fill="#f3b935" />
          <path d="M0 5h22v13H0z" fill="#ffda6b" />
          <path d="M4 18v-6q0-2 2-2h10q2 0 2 2v6h-4v-4H8v4z" fill="#3e93dc" />
        </svg>
      </button>
      <button aria-label="Firefox" className="flex w-[50px] justify-center">
        <Firefox className="size-6" />
      </button>
      <button aria-label="Opera" className="flex w-12 justify-center">
        <Opera className="size-[22px]" />
      </button>
      <button aria-label="WinRAR" className="ml-[5px] flex h-10 w-10 items-center justify-center border-b-2 border-[#76b9ed]">
        <Winrar className="size-6" />
      </button>
      <div className="ml-auto flex h-full items-center">
        <button aria-label="Show hidden icons" className="flex w-6 justify-center">
          <Glyph d="M2 11l6-6 6 6" className="size-3.5" stroke="#fff" width={1.2} />
        </button>
        <button aria-label="Network" className="flex w-6 justify-center">
          <svg viewBox="0 0 16 16" className="size-4" fill="none" stroke="#fff">
            <path d="M4 3.500h11.500v8H4M1 1.500h4v4H1zM3 5.500v9M7 14.500h6M10 12v2.500" />
          </svg>
        </button>
        <button aria-label="Volume" className="flex w-6 justify-center">
          <svg viewBox="0 0 16 16" className="size-4" fill="none" stroke="#fff">
            <path d="M.5 5.500h2.500L6.500 2v12L3 10.500H.5zM9 5.500q2 2.500 0 5M11.500 3.500q3.500 4.500 0 9M13.500 1.500q4 6.500 0 13" />
          </svg>
        </button>
        <button className="w-9 text-center">ITA</button>
        <button className="w-[66px] text-center leading-[18px]">
          <div>04:14</div>
          <div>07/03/2023</div>
        </button>
        <button aria-label="Notifications" className="flex w-[38px] justify-center">
          <svg viewBox="0 0 16 16" className="size-4" fill="none" stroke="#fff">
            <path d="M.5 1.500h15v11h-5L8 15l-2.500-2.500h-5z" />
          </svg>
        </button>
        <span className="mr-1 ml-[9px] h-full border-l border-[#5a6370]" />
      </div>
    </footer>
  )
}

function App() {
  return (
    <div className="flex h-screen flex-col overflow-hidden font-['Open_Sans',sans-serif] text-[11px]">
      <main className="relative flex-1 overflow-hidden bg-[linear-gradient(97deg,#00a3f5_0%,#00b0ff_22%,#0098f2_48%,#0075dd_66%,#0056cf_80%,#0050d2_86%,#0036b2_100%)]">
        <Desktop />
        <span className="absolute top-[275px] left-[1104px] leading-[15px] text-white">ra</span>
        <ArchiveWindow />
        <ViewerWindow />
        <ExplorerWindow />
        <Watermark />
      </main>
      <Taskbar />
    </div>
  )
}

export default App
